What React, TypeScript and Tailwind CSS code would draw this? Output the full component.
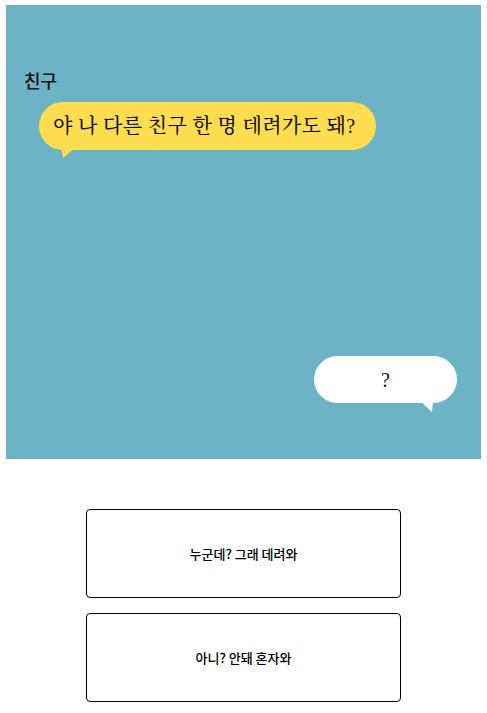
import React from 'react';

const serif = 'font-["Liberation_Serif","Noto_Serif_CJK_KR","Noto_Sans_CJK_KR",serif]';

const App: React.FC = () => {
  const choices = ['누군데? 그래 데려와', '아니? 안돼 혼자와'];

  return (
    <div className='min-h-screen bg-white font-["Noto_Sans_CJK_KR",sans-serif]'>
      {/* Chat scene */}
      <div className="mx-[6px] mt-[5px] h-[454px] bg-[#6db3c6] pt-[62px] pl-[18px] pr-[24px] flex flex-col">
        <h2 className="text-[18px] leading-[27px] font-medium text-[#111]">친구</h2>

        <div className="relative ml-[15px] mt-[8px] self-start">
          <div
            className={`h-[48px] w-[337px] rounded-full bg-[#fedd4e] flex items-center pl-[14px] text-[20px] font-medium tracking-[0.35px] text-[#111] ${serif}`}
          >
            야 나 다른 친구 한 명 데려가도 돼?
          </div>
          <svg className="absolute left-[22px] top-[46px]" width="14" height="10" viewBox="0 0 14 10">
            <polygon points="0,0 14,0 2,10" fill="#fedd4e" />
          </svg>
        </div>

        <div className="relative mt-[206px] self-end">
          <div
            className={`h-[47px] w-[143px] rounded-full bg-white flex items-center justify-center text-[20px] text-[#111] ${serif}`}
          >
            ?
          </div>
          <svg className="absolute left-[106px] top-[45px]" width="14" height="12" viewBox="0 0 14 12">
            <polygon points="0,0 13,0 12,11" fill="#ffffff" />
          </svg>
        </div>
      </div>

      {/* Answers */}
      <div className="mt-[50px] flex flex-col items-center gap-[15px]">
        {choices.map((c) => (
          <button
            key={c}
            type="button"
            className="h-[89px] w-[315px] rounded-[4px] border border-black bg-white text-[13px] font-medium text-black"
          >
            {c}
          </button>
        ))}
      </div>
    </div>
  );
};

export default App;
